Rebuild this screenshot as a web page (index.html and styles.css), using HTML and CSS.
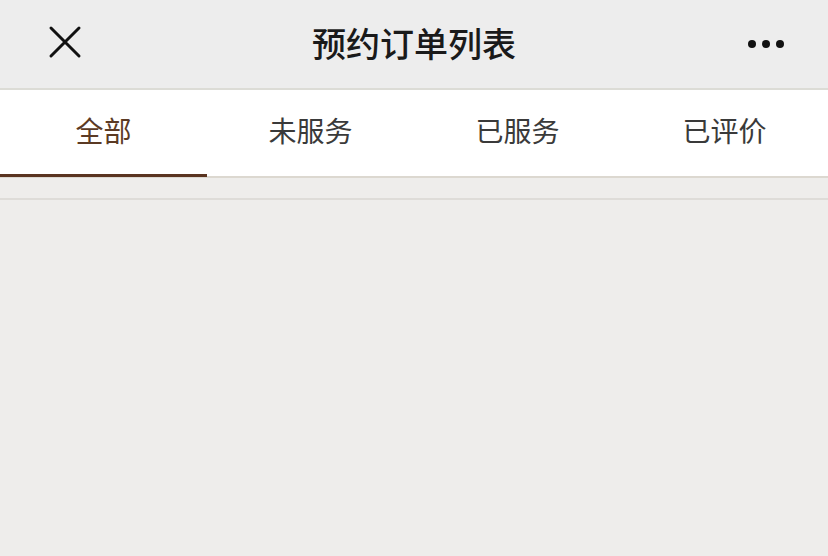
FILE: index.html
```html
<!DOCTYPE html>
<html lang="zh-CN">
<head>
<meta charset="utf-8">
<title>预约订单列表</title>
<link rel="stylesheet" href="styles.css">
</head>
<body>
<header class="navbar">
  <button class="nav-btn close-btn" aria-label="关闭">
    <svg width="34" height="34" viewBox="0 0 34 34"><path d="M3 3 L31 31 M31 3 L3 31" stroke="#111" stroke-width="3" stroke-linecap="round" fill="none"/></svg>
  </button>
  <h1 class="nav-title">预约订单列表</h1>
  <button class="nav-btn more-btn" aria-label="更多">
    <span class="dot"></span><span class="dot"></span><span class="dot"></span>
  </button>
</header>
<nav class="tabs">
  <div class="tab active">全部</div>
  <div class="tab">未服务</div>
  <div class="tab">已服务</div>
  <div class="tab">已评价</div>
</nav>
<div class="spacer"></div>
<main class="content"></main>
</body>
</html>
```

FILE: styles.css
```css
* { box-sizing: border-box; }
html, body {
  margin: 0;
  padding: 0;
  height: 100%;
  background: #eeedeb;
  font-family: "Noto Sans CJK SC", "Noto Sans", sans-serif;
}
.navbar {
  height: 90px;
  background: #ededed;
  border-bottom: 2px solid #dcdcd6;
  display: flex;
  align-items: center;
  justify-content: space-between;
  padding: 0 44px 0 48px;
  position: relative;
}
.nav-btn {
  background: none;
  border: 0;
  padding: 0;
  display: flex;
  align-items: center;
  margin-top: -4px;
}
.close-btn svg { display: block; }
.nav-title {
  position: absolute;
  left: 0;
  right: 0;
  top: 0;
  margin: 0;
  text-align: center;
  line-height: 86px;
  font-size: 34px;
  font-weight: 500;
  color: #1a1a1a;
  pointer-events: none;
}
.more-btn { gap: 6px; margin-top: 0; }
.dot {
  width: 8px;
  height: 8px;
  border-radius: 50%;
  background: #111;
}
.tabs {
  display: grid;
  grid-template-columns: repeat(4, 1fr);
  background: #fff;
  height: 88px;
  border-bottom: 2px solid #dcd8d0;
}
.tab {
  display: flex;
  align-items: center;
  justify-content: center;
  font-size: 28px;
  color: #3a3a3a;
  padding-bottom: 4px;
  border-bottom: 3px solid transparent;
  margin-bottom: -1px;
}
.tab.active {
  color: #5b3a24;
  border-bottom-color: #5a3420;
}
.spacer {
  height: 22px;
  border-bottom: 2px solid #dedcd8;
  background: #eeedeb;
}
.content {
  background: #eeedeb;
}
```
